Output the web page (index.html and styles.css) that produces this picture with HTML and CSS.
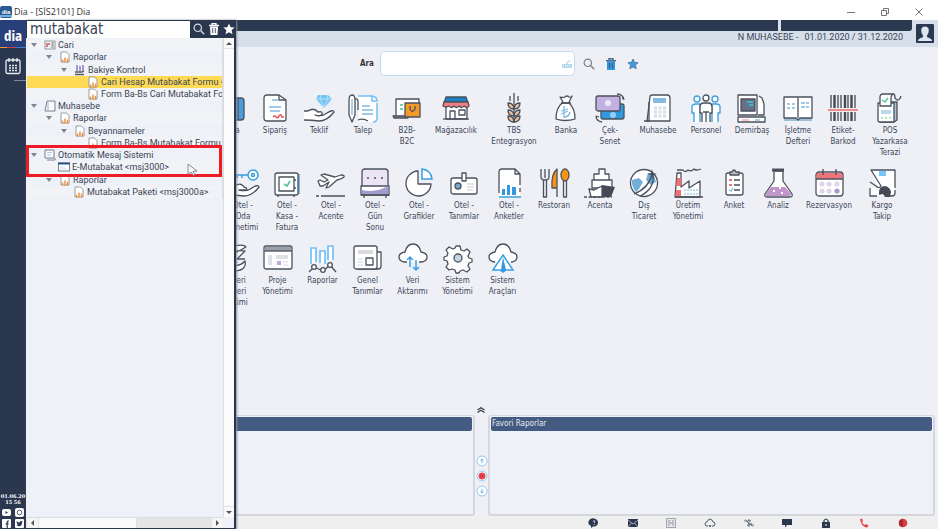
FILE: index.html
```html
<!DOCTYPE html>
<html lang="tr">
<head>
<meta charset="utf-8">
<title>Dia - [SİS2101] Dia</title>
<link rel="stylesheet" href="styles.css">
</head>
<body>
<svg class="defs" aria-hidden="true">
  <symbol id="report" viewBox="0 0 10 12"><path d="M1 1h5.500l2.500 2.500v7.500H1z" fill="#fff" stroke="#8d939d" stroke-width=".9"/><path d="M2.500 11.500V8.500M5 11.500V6.500M7.500 11.500V7.800" stroke="#ee9347" stroke-width="1.500"/></symbol>
  <symbol id="glass" viewBox="0 0 12 12"><circle cx="4.800" cy="4.800" r="3.700" fill="none" stroke="currentColor" stroke-width="1.200"/><path d="M7.600 7.600l3.600 3.600" stroke="currentColor" stroke-width="1.400"/></symbol>
</svg>
<div class="window">
  <header class="titlebar">
    <svg class="app-icon" viewBox="0 0 12 12"><rect width="12" height="12" rx="2" fill="#2b5a93"/><rect y="9" width="12" height="2" fill="#6fb4e0"/><text x="6" y="8" class="mini-logo">dia</text></svg>
    <h1>Dia - [SİS2101] Dia</h1>
    <div class="window-buttons">
      <button aria-label="Küçült"><svg viewBox="0 0 10 10"><path d="M1 5.500h8" class="wb"/></svg></button>
      <button aria-label="Önceki boyut"><svg viewBox="0 0 10 10"><path d="M1.500 3.500h5v5h-5zM3.500 3.500v-2h5v5h-2" class="wb"/></svg></button>
      <button aria-label="Kapat"><svg viewBox="0 0 10 10"><path d="M1.500 1.500l7 7M8.500 1.500l-7 7" class="wb"/></svg></button>
    </div>
  </header>
  <div class="body">
    <nav class="rail">
      <div class="logo"><span>dia</span></div>
      <button class="calendar" aria-label="Takvim"><svg viewBox="0 0 16 18"><rect x="1" y="3" width="14" height="13.500" rx="1.500" fill="none" stroke="#e8ebf1" stroke-width="1.300"/><path d="M4 1v4M8 1v4M12 1v4" stroke="#e8ebf1" stroke-width="1.300"/><path d="M4 8.500h8M4 11h8M4 13.500h8" stroke="#e8ebf1" stroke-width="1.500" stroke-dasharray="2 1"/></svg></button>
      <div class="rail-line"></div>
      <div class="clock">01.06.20<br>15 56</div>
      <div class="social">
        <a href="#" aria-label="YouTube"><svg viewBox="0 0 9 9"><rect y="1" width="9" height="7" rx="2" fill="#fff"/><path d="M3.500 3v3l2.500-1.500z" fill="#2a374f"/></svg></a>
        <a href="#" aria-label="Instagram"><svg viewBox="0 0 9 9"><rect width="9" height="9" rx="2" fill="#fff"/><circle cx="4.500" cy="4.500" r="2.300" fill="none" stroke="#2a374f" stroke-width=".8"/></svg></a>
        <a href="#" aria-label="Facebook"><svg viewBox="0 0 9 9"><rect width="9" height="9" rx="1" fill="#fff"/><path d="M5.200 9V3.200q0-1.400 1.800-1.200M3.700 4.800h3" fill="none" stroke="#2a374f" stroke-width="1.200"/></svg></a>
        <a href="#" aria-label="Twitter"><svg viewBox="0 0 9 9"><rect width="9" height="9" rx="1" fill="#fff"/><path d="M1.500 2q1.300 1.500 3 1.500Q4.500 2 6 2l1.800.4-.7 1Q7 7 4 7.300L1.500 6.700l1.300-.6Q1.300 4.500 1.500 2z" fill="#2a374f"/></svg></a>
      </div>
    </nav>

    <main class="main">
      <div class="topbar">
        <div class="strips"><div class="strip"></div><div class="strip strip-end"></div></div>
        <div class="period"><span>N MUHASEBE -</span><span>01.01.2020 / 31.12.2020</span></div>
        <button class="user" aria-label="Kullanıcı"><svg viewBox="0 0 18 19"><rect width="18" height="19" rx="1" fill="#2a3850"/><path d="M2 17q0-2.500 4.500-3.500l.7-1.500Q5 9 5.200 6q.3-3.500 3.800-3.500T12.800 6q.2 3-2 6l.7 1.500Q16 14.500 16 17z" fill="#dde6f0"/></svg></button>
      </div>

      <div class="search-row">
        <label for="module-search">Ara</label>
        <div class="search-box"><input id="module-search" type="text"><svg viewBox="0 0 12 10"><rect x="1" y="5" width="10" height="4" fill="#b5d7ee"/><path d="M6 5V3.500L9.500 1.500" stroke="#a9cbe4" fill="none"/><path d="M2 7h8" stroke="#fff" stroke-dasharray="1 1"/></svg></div>
        <button class="tool gray" aria-label="Ara"><svg viewBox="0 0 12 12"><use href="#glass"/></svg></button>
        <button class="tool" aria-label="Sil"><svg viewBox="0 0 12 12"><path d="M2 3.500h8v8.500H2z" fill="#2f96da"/><path d="M1 2.800h10M4 2V.8h4V2" fill="none" stroke="#466b8d" stroke-width="1.400"/><path d="M4.500 5v5M7.500 5v5" stroke="#3a5c80"/></svg></button>
        <button class="tool" aria-label="Favoriler"><svg viewBox="0 0 12 12"><path d="M6 1l1.500 3.300 3.600.4-2.700 2.400.8 3.600L6 8.900l-3.200 1.800.8-3.600L.9 4.700l3.600-.4z" fill="#3aa0e4" stroke="#52749a" stroke-width=".9"/></svg></button>
      </div>

      <section class="modules" aria-label="Modüller">
        <div class="row row-one">
          <button class="module"><svg viewBox="0 0 30 30"><rect x="5" y="5" width="23" height="22" rx="3" fill="#4a9ddc" class="l"/><path d="M22 5v22" class="l"/></svg>Kasa</button>
          <button class="module"><svg viewBox="0 0 30 30"><path d="M7 2h12l7 5v19q0 2-2 2H7q-3 0-3-3V5q0-3 3-3z" fill="#fff" class="l"/><path d="M19 2v5h7" class="n l"/><path d="M12 7h7M9 14h12M10 18h10" class="b"/><path d="M13 24q2-2 3 0t3-1 3 1h2" fill="none" stroke="#e2595b" stroke-width="1.600"/></svg>Sipariş</button>
          <button class="module"><svg viewBox="0 0 30 30"><path d="M14 2h10l4 4-8 9-8-9z" fill="#74c3f4"/><path d="M12 6h16M17 2l-1 4 4 8 4-8-1-4" fill="none" stroke="#b8e2fb"/><path d="M0 18h4q6-4 10 1 5-1 4 2t-7 1q7 2 12-2 6-4 7-1-7 9-15 9-7-1-15-1" fill="#fff" class="l"/></svg>Teklif</button>
          <button class="module"><svg viewBox="0 0 30 30"><path d="M10 3h14q5 1 5 5v18q0 3-4 3H11" fill="#fff"/><path d="M10 3h14q5 1 5 5h-5V3M29 10v15q0 4-4 4" fill="none" stroke="#74bff1" stroke-width="1.500"/><path d="M14 13h8M14 17h11M14 21h11" class="b"/><path d="M1 7q0-5 3-5t3 5v15l-3 7-3-7zM7 6q3-1 3 3v8" fill="#fff" class="l"/><path d="M4 6v16" class="b"/><path d="M10 27q5-2 10 1" class="n l"/></svg>Talep</button>
          <button class="module"><svg viewBox="0 0 30 30"><path d="M4 23V6h23v8" fill="#fff" class="l"/><path d="M1 23h15v2H2z" fill="#999ca4" class="l"/><path d="M8 12h3M8 16h3" stroke="#75d1a5" stroke-width="2"/><path d="M13 10h15v14H13z" fill="#f39a2a" class="l"/><path d="M18 13v3q2.500 5 5 0v-3" class="n l"/></svg>B2B-<br>B2C</button>
          <button class="module"><svg viewBox="0 0 30 30"><path d="M5 12h21v14H5z" fill="#fff" class="l"/><path d="M5 4h20l2 6H3z" fill="#1d80c3" class="l"/><path d="M3 9h24l1 4q-2 3-5 0-2 3-5 0-2 3-5 0-3 3-5 0-3 2-6 0z" fill="#f17e83" class="l"/><path d="M9 26v-8h5v8M18 17h6v5h-6z" class="n l"/><path d="M2 26h26" class="l"/></svg>Mağazacılık</button>
          <button class="module"><svg viewBox="0 0 30 30"><g fill="#edc39f" class="l"><path d="M15 16q-6 0-6-6 5 0 6 5 1-5 6-5 0 6-6 6z"/><path d="M15 23q-6 0-6-6 5 0 6 5 1-5 6-5 0 6-6 6z"/><path d="M15 29q-6 0-6-6 5 0 6 5 1-5 6-5 0 6-6 6z"/></g><path d="M15 0v30M11 3v5M19 3v5" class="l"/></svg>TBS<br>Entegrasyon</button>
          <button class="module"><svg viewBox="0 0 30 30"><path d="M11 10q-6 5-6 16 9 3 19 0 0-11-6-16z" fill="#fff" class="l"/><path d="M10 10h10M12 9L9 4q3 1 5 0 2-2 4 0 3 1 3-1l-3 6" fill="#fff" class="l"/><path d="M13 13v11q5 0 6-5M10 18l7-2M10 21l7-3" class="b"/></svg>Banka</button>
          <button class="module"><svg viewBox="0 0 30 30"><rect x="6" y="11" width="23" height="15" rx="2" fill="#2f99df" class="l"/><circle cx="18" cy="22" r="3" fill="#93cdf1"/><rect x="1" y="3" width="24" height="15" rx="2" fill="#c2b1df" class="l"/><circle cx="13" cy="10" r="3" fill="#eee8f6"/><path d="M22 1q6 0 7 6M1 23q0 5 6 6M29 6l-2-1M1 23l3 1" class="n l"/></svg>Çek-<br>Senet</button>
          <button class="module"><svg viewBox="0 0 30 30"><path d="M9 2h15q3 0 3 3v23H4L7 4q0-2 2-2z" fill="#fff" class="l"/><path d="M1 28h6M6 9v18" class="l"/><path d="M10 5h13v5H10z" fill="#86bbe1"/><path d="M11 15h12M11 19h12M11 23h12" stroke="#d7dfea" stroke-width="3" stroke-dasharray="3 1.500"/></svg>Muhasebe</button>
          <button class="module"><svg viewBox="0 0 30 30"><g fill="#fff" stroke="#44a1df" stroke-width="1.400"><circle cx="6" cy="6" r="3"/><circle cx="24" cy="6" r="3"/><path d="M3 29V20H1v-6q0-3 4-3h4v18M27 29v-9h2v-6q0-3-4-3h-4v18"/></g><circle cx="15" cy="5" r="3" fill="#fff" class="l"/><path d="M11 29v-9H9v-6q0-4 4-4h4q4 0 4 4v6h-2v9" fill="#fff" class="l"/><path d="M15 19v10M12 19h6" class="l"/></svg>Personel</button>
          <button class="module"><svg viewBox="0 0 30 30"><path d="M1 2h19v20H1zM22 3l3 2 2 6v11h-6" fill="#fff" class="l"/><rect x="4" y="6" width="14" height="12" fill="#65718b" class="l"/><path d="M10 9h6M12 12h4" stroke="#3ec8d0" stroke-width="1.500"/><path d="M1 24h27v5H1z" fill="#fff" class="l"/><path d="M5 27h7" stroke="#ef8a8f"/><path d="M18 27h5" class="b"/></svg>Demirbaş</button>
          <button class="module"><svg viewBox="0 0 30 30"><path d="M1 28v-3h28v3z" fill="#9cbddb"/><path d="M1 4h28v21h-12l-2 2-2-2H1z" fill="#fff" class="l"/><path d="M15 5v20" class="l"/><path d="M4 11h3M9 11h3M4 15h3M9 15h3M18 10h4M23 10h3M18 14h4M23 14h3" class="b"/></svg>İşletme<br>Defteri</button>
          <button class="module"><svg viewBox="0 0 30 30"><path d="M3 2v26M10 2v26M13 2v26M20 2v26M27 2v26" stroke="#444950" stroke-width="1.300"/><path d="M6.500 2v26M17 2v26M23.500 2v26" stroke="#444950" stroke-width="2.400"/><path d="M0 15h30v4H0z" fill="#eff0f6"/><path d="M0 17h30" stroke="#ed7375" stroke-width="1.600"/></svg>Etiket-<br>Barkod</button>
          <button class="module"><svg viewBox="0 0 30 30"><path d="M17 9h5v18l-3 2H5z" fill="#a5c3dd" class="l"/><path d="M3 10h16v19H5q-2 0-2-2z" fill="#fff" class="l"/><path d="M5 13V4q0-3 3-3h10q-2 1-2 4v8z" fill="#fff" class="l"/><path d="M18 1q2 0 2 4 4 5 6-2" class="n l"/><path d="M7 7l3 2 3-4" stroke="#58c99a" fill="none" stroke-width="1.500"/><path d="M6 19h10" stroke="#bdd9ed" stroke-width="4"/><path d="M6 25h10" stroke="#67c9a0" stroke-dasharray="2 2"/></svg>POS<br>Yazarkasa<br>Terazi</button>
        </div>
        <div class="row row-two">
          <button class="module"><svg viewBox="0 0 30 30"><path d="M5 7h15M9 7v3M14 7v3" class="blue"/><circle cx="25" cy="7" r="5" fill="#fff" class="blue"/><circle cx="25" cy="7" r="1.500" class="blue"/><path d="M0 18h7q6-4 9 1 4 1 2 3h-7q8 2 13-2 6-4 7-1-7 9-15 9-7-1-16-1" fill="#fff" class="l"/></svg>Otel -<br>Oda<br>Yönetimi</button>
          <button class="module"><svg viewBox="0 0 30 30"><path d="M26 6h2v20h-2z" fill="#78b8e4"/><rect x="3" y="5" width="23" height="22" rx="2" fill="#fff" class="l"/><rect x="7" y="9" width="15" height="14" fill="#fff" class="l"/><path d="M12 16l3 2 3-5" stroke="#4fc99a" stroke-width="1.600" fill="none"/><path d="M6 27v2M22 27v2M22 12h2M22 20h2" class="l"/></svg>Otel -<br>Kasa -<br>Fatura</button>
          <button class="module"><svg viewBox="0 0 30 30"><path d="M4 18l-2-5 2-1 4 2 4-2-7-5 3-1 11 3 6-2q4 0 3 2-2 2-7 3l-8 7-3 1 3-6-6 4z" fill="#fff" class="l"/><path d="M5 28h24M0 28h3" class="l"/></svg>Otel -<br>Acente</button>
          <button class="module"><svg viewBox="0 0 30 30"><path d="M2 20V4q0-3 3-3h20q3 0 3 3v16z" fill="#ebe5f5" class="l"/><path d="M7 10h2M14 10h2M21 10h2" class="l"/><path d="M1 18h28v9H1z" fill="#fff" class="l"/><path d="M2 22q14 3 26-4v8H2z" fill="#a59bd0"/><path d="M4 27v3M26 27v3M1 27h28" class="l"/></svg>Otel -<br>Gün<br>Sonu</button>
          <button class="module"><svg viewBox="0 0 30 30"><path d="M14 3v13h13A12.500 12.500 0 1 1 14 3z" fill="#fff" class="l"/><path d="M18 1q9 1 10 10H18z" fill="#fff" class="blue"/></svg>Otel -<br>Grafikler</button>
          <button class="module"><svg viewBox="0 0 30 30"><rect x="2" y="10" width="26" height="16" rx="2" fill="#fff" class="l"/><path d="M13 5h4v8h-4z" fill="#fff" class="l"/><circle cx="9" cy="18" r="3" fill="#78a6d0" class="l"/><path d="M18 16h7M18 19h7M18 22h6" stroke="#c8cbd1"/></svg>Otel -<br>Tanımlar</button>
          <button class="module"><svg viewBox="0 0 30 30"><path d="M5 29V4q0-3 3-3h13l5 5v23z" fill="#fff"/><path d="M5 25V4q0-3 3-3h13l5 5v11M21 1v5h5M26 20v4" class="n l"/><path d="M8 27v-6h3v6zM13 27V17h3v10zM18 27v-8h4v8z" fill="#3298df"/><path d="M5 29h22" class="blue"/></svg>Otel -<br>Anketler</button>
          <button class="module"><svg viewBox="0 0 30 30"><path d="M2 1v8q0 3 4 3t4-3V1M6 1v9M4.500 12v17h3V12" class="n l"/><path d="M18 29V1q-6 5-5 19h5" fill="#f79410" class="l"/><path d="M24.500 12v17h3V12" class="n l"/><ellipse cx="26" cy="7" rx="4" ry="6" fill="#f79410" class="l"/></svg>Restoran</button>
          <button class="module"><svg viewBox="0 0 30 30"><path d="M14 6V1h6v5h4v6H9V6zM7 12h20v8H7z" fill="#fff" class="l"/><path d="M17 17l13 2-4 10H15z" fill="#454b56"/><path d="M4 21l5 1 8-4v11H6z" fill="#fff" class="l"/><path d="M-1 29h28" class="l" stroke-dasharray="3 1.500"/></svg>Acenta</button>
          <button class="module"><svg viewBox="0 0 30 30"><circle cx="15" cy="15" r="13.500" fill="#fff" class="l"/><path d="M3 12l7-2 4 4-4 7-3 3q-5-6-4-12zM19 5l6 2 2 7-5 3-5-5z" fill="#72acd8"/><path d="M5 26Q20 20 23 6M11 28Q26 21 24 6" class="n l"/><path d="M23 1l1 4 4 1-4 1-1 4-1-4-4-1 4-1z" fill="#4b515c"/></svg>Dış<br>Ticaret</button>
          <button class="module"><svg viewBox="0 0 30 30"><path d="M2 29L4 5h4v14l8-6v7l11-7v16z" fill="#fff" class="l"/><path d="M3 18L4 10h4v8zM2 29l1-7h5v7z" fill="#ee7075"/><path d="M4 2h6q2 3 5 0 3 2 6-1 2 2 7 0M2 29h28" class="n l"/><path d="M11 22h14M11 26h14" stroke="#b8dbf2" stroke-width="2" stroke-dasharray="2 1"/></svg>Üretim<br>Yönetimi</button>
          <button class="module"><svg viewBox="0 0 30 30"><rect x="7" y="5" width="17" height="22" rx="2" fill="#fff" class="l"/><path d="M11 7V4h2q2-4 4 0h3v3z" fill="#bbbec5" class="l"/><path d="M15 12h6M15 17h6M15 22h6" class="l"/><path d="M10 12h3M10 17h3" stroke="#ed7375" stroke-width="2"/><path d="M10 22l2 1 2-3" class="b"/></svg>Anket</button>
          <button class="module"><svg viewBox="0 0 30 30"><path d="M11 3v10L2 26q-1 3 2 3h23q3 0 2-3l-9-13V3z" fill="#fff" class="l"/><path d="M8 19h14l6 7q0 2-2 2H4q-2 0-1-2z" fill="#c195cb"/><path d="M9 2h12" stroke="#4c525c" stroke-width="3"/><path d="M10 23h2M18 25h2M16 20h2" stroke="#fff" stroke-width="2"/></svg>Analiz</button>
          <button class="module"><svg viewBox="0 0 30 30"><rect x="2" y="4" width="27" height="24" rx="3" fill="#fff" class="l"/><path d="M3 5h25v6H3z" fill="#f07479"/><path d="M2 11h27M9 1v6M22 1v6" class="l"/><g fill="#ded5e9"><circle cx="8" cy="16" r="2.600"/><circle cx="15" cy="16" r="2.600"/><circle cx="23" cy="16" r="2.600"/><circle cx="8" cy="23" r="2.600"/><circle cx="15" cy="23" r="2.600"/></g><circle cx="23" cy="23" r="2.600" fill="#aa99ca"/></svg>Rezervasyon</button>
          <button class="module"><svg viewBox="0 0 30 30"><path d="M4 2h24v26H3v-8l8-1z" fill="#fff"/><path d="M28 20V2H4l10 16q-2 3-5 0l-6-4M3 20v8h7M28 22v3q0 3-3 3h-2" class="n l"/><path d="M12 3h7v5h-7z" fill="#75c5fb"/><path d="M12 24q0-6 6-6 5 1 6 6l-1 5h-5l-2-3-4 1z" fill="#454b55"/></svg>Kargo<br>Takip</button>
        </div>
        <div class="row row-three">
          <button class="module"><svg viewBox="0 0 30 30"><path d="M4 3h12q10-2 12 1l-9 5h-8M4 13q12-7 23-5l-8 8 8 0M0 17h9q7-3 9 2l-5 3q9 2 14-4 2 9-10 10H0" fill="#fff" class="l"/></svg>Müşteri<br>İlişkileri<br>Yönetimi</button>
          <button class="module"><svg viewBox="0 0 30 30"><rect x="1" y="3" width="28" height="23" rx="2" fill="#fff" class="l"/><path d="M2 4h26v4H2z" fill="#9ba1aa"/><path d="M1 8h28" class="l"/><path d="M5 12h4v10H5zM13 12h12v4H13z" fill="#e0e1e7"/><path d="M14 18h4v4h-4z" fill="#c5a9da"/><path d="M20 19h5M20 22h5" stroke="#d7d9df"/></svg>Proje<br>Yönetimi</button>
          <button class="module"><svg viewBox="0 0 30 30"><path d="M3 21V5h5v14M12 20V8h5v13M20 17V3h5v14" fill="#fff" stroke="#74c0f5" stroke-width="1.700"/><path d="M1 29l5-5 9 4 7-6 6 7" class="n l"/><g fill="#fff" class="l"><circle cx="6" cy="24" r="2.300"/><circle cx="15" cy="27" r="2.300"/><circle cx="22" cy="22" r="2.300"/></g></svg>Raporlar</button>
          <button class="module"><svg viewBox="0 0 30 30"><path d="M23 9h5v14q0 3-3 3H5" fill="#fff" class="l"/><rect x="1" y="3" width="23" height="23" rx="2" fill="#fff" class="l"/><path d="M5 7h15v4H5z" fill="#dadce2"/><rect x="13" y="15" width="7" height="7" fill="#fff" class="l"/><path d="M5 16h5M5 19h5M5 22h5" stroke="#d2d4d9"/></svg>Genel<br>Tanımlar</button>
          <button class="module"><svg viewBox="0 0 30 30"><path d="M9 19H6q-5-1-5-5t6-5q2-8 8-8t8 8q6 1 6 5t-5 5h-3" fill="#fff" class="l"/><path d="M12 24V14m-3 3l3-3 3 3M18 17v10m-3-3l3 3 3-3" class="blue"/></svg>Veri<br>Aktarımı</button>
          <button class="module"><svg viewBox="0 0 30 30"><path d="M13 3h4l1 4 3 1 3-2 3 3-2 4 1 2 3 1v3l-3 1-1 3 2 3-3 3-4-2-3 1-1 2h-3l-1-3-3-1-3 1-3-3 2-3-1-3-3-1v-3l3-1 1-3-2-3 3-3 4 2 2-1z" fill="#fff" class="l"/><circle cx="15" cy="15" r="4" fill="#c2d4e5" class="l"/></svg>Sistem<br>Yönetimi</button>
          <button class="module"><svg viewBox="0 0 30 30"><path d="M7 19H6q-5-1-5-5t6-5q2-8 8-8t8 8q6 1 6 5t-5 5h-1" fill="#fff" class="l"/><path d="M15 12l10 15h-7l-3 2-3-2H5z" fill="#fff" class="blue"/><path d="M15 14l3 13-3 2-2-2z" fill="#319ae2"/></svg>Sistem<br>Araçları</button>
        </div>
      </section>

      <button class="collapse" aria-label="Aç / kapat"><svg viewBox="0 0 8 6"><path d="M.500 3L4 .8 7.500 3M.500 5.500L4 3.300l3.500 2.200" fill="none" stroke="#303b4d" stroke-width="1.200"/></svg></button>
      <div class="panels">
        <section class="panel"><h2>&nbsp;</h2></section>
        <div class="panel-tools">
          <button aria-label="Yukarı"><svg viewBox="0 0 12 12"><circle cx="6" cy="6" r="5" class="ring"/><path d="M6 8V4M4.500 5.500L6 4l1.500 1.500" class="arrow"/></svg></button>
          <button aria-label="Kaldır"><svg viewBox="0 0 12 12"><circle cx="6" cy="6" r="5" class="ring"/><circle cx="6" cy="6" r="3.500" fill="#f0444c"/><path d="M4 6h4" stroke="#a8303b"/></svg></button>
          <button aria-label="Aşağı"><svg viewBox="0 0 12 12"><circle cx="6" cy="6" r="5" class="ring"/><path d="M6 4v4M4.500 6.500L6 8l1.500-1.500" class="arrow"/></svg></button>
        </div>
        <section class="panel"><h2>Favori Raporlar</h2></section>
      </div>
      <footer class="status">
        <button aria-label="Yardım"><svg viewBox="0 0 12 10"><path d="M6 .5a4.500 4 0 1 1-1 8L3 10V8A4.500 4 0 0 1 6 .5z" fill="#2a374f"/><path d="M4.800 3.500Q6 2 7 3.300 7 4.500 6 5M6 6v1" stroke="#fff" stroke-width=".8" fill="none"/></svg></button>
        <button aria-label="Posta"><svg viewBox="0 0 12 10"><path d="M1 1h10v8H1z" fill="#2a374f"/><path d="M1 2l5 4 5-4M1 9l3.500-4M11 9L7.500 5" fill="none" stroke="#d2d8e1" stroke-width=".7"/></svg></button>
        <button aria-label="Haberler"><svg viewBox="0 0 12 10"><path d="M1.500.5h9v9h-9z" fill="#e7e9ec" stroke="#8b929e" stroke-width=".8"/><path d="M3 3h2.500M7 3h2M3 5h6M3 7h2M7 7h2" stroke="#78808e" stroke-width=".8"/></svg></button>
        <button aria-label="Bulut"><svg viewBox="0 0 12 10"><path d="M4 8H3Q1 8 1 6t2-2q1-3 3-3t3 3q2 0 2 2T9 8H8M5 7l1 2 1-2" fill="none" stroke="#4d586a"/></svg></button>
        <button aria-label="Döviz"><svg viewBox="0 0 12 10"><path d="M8 3Q4 1.500 4.500 4T8 6 4 7.500M6 1v8M1 3h3L2.500 1.500M11 7H8l1.500 1.500" fill="none" stroke="#596474" stroke-width=".9"/></svg></button>
        <button aria-label="Mesajlar"><svg viewBox="0 0 12 10"><path d="M1 1h10v6H6L4 9.500V7H1z" fill="#2a374f"/></svg></button>
        <button aria-label="Kilitle"><svg viewBox="0 0 12 10"><path d="M2 4h8v6H2z" fill="#2a374f"/><path d="M4 4V2.500Q6-.5 8 2.500V4" fill="none" stroke="#2a374f" stroke-width="1.200"/><path d="M6 6v2" stroke="#fff"/></svg></button>
        <button aria-label="Telefon"><svg viewBox="0 0 12 10"><path d="M2 1l2-.5 1 2.500-1 1q1 2.500 3 3l1-1 2.500 1.500Q10 9.500 8.500 9.500 3 8.500 2 1z" fill="#e8434a"/></svg></button>
        <button aria-label="Kayıt"><svg viewBox="0 0 12 10"><circle cx="6" cy="5" r="4.300" fill="#df3b3f"/><path d="M6 1a4 4 0 0 0 0 8z" fill="#a72730"/></svg></button>
      </footer>

      <aside class="drawer">
        <div class="drawer-search">
          <input type="text" value="mutabakat" aria-label="Menüde ara">
          <button aria-label="Ara"><svg viewBox="0 0 12 12"><use href="#glass"/></svg></button>
          <button aria-label="Temizle"><svg viewBox="0 0 12 12"><path d="M2 3.500h8L9.500 12h-7z" fill="#fff"/><path d="M1 2.500h10M4 2V.7h4V2" fill="none" stroke="#fff" stroke-width="1.300"/><path d="M4.700 5v5M7.300 5v5" stroke="#2a374f" stroke-width=".8"/></svg></button>
          <button aria-label="Favoriler"><svg viewBox="0 0 12 12"><path d="M6 .5l1.600 3.700 4 .3-3 2.700.9 4L6 9.200l-3.500 2 .9-4-3-2.700 4-.3z" fill="#fff"/></svg></button>
        </div>
        <div class="drawer-body">
          <ul class="tree">
            <li class="d1"><i></i><svg viewBox="0 0 12 10"><rect x="1" y="1" width="10" height="8" fill="#eee" stroke="#7d8591" stroke-width=".8"/><path d="M3 3v4M5 3v2" stroke="#d1474e" stroke-width="1.400"/><path d="M7.500 3h2M7.500 5h2M7.500 7h2" stroke="#555d69"/></svg>Cari</li>
            <li class="d2"><i></i><svg><use href="#report"/></svg>Raporlar</li>
            <li class="d3"><i></i><svg viewBox="0 0 12 12"><path d="M3 1v6M6 2v5M9 1v6" stroke="#9b8fca" stroke-width="1.800"/><path d="M1 8h7l2-1M1 10.500h9" stroke="#525a67" fill="none" stroke-width="1.300"/></svg>Bakiye Kontrol</li>
            <li class="d4 selected"><svg><use href="#report"/></svg>Cari Hesap Mutabakat Formu &lt;</li>
            <li class="d4"><svg><use href="#report"/></svg>Form Ba-Bs Cari Mutabakat For</li>
            <li class="d1"><i></i><svg viewBox="0 0 12 12"><path d="M3 1h8v10H1z" fill="#f8fafc" stroke="#6d7582" stroke-width=".9"/><path d="M4 2v8" stroke="#91bbdc"/></svg>Muhasebe</li>
            <li class="d2"><i></i><svg><use href="#report"/></svg>Raporlar</li>
            <li class="d3"><i></i><svg><use href="#report"/></svg>Beyannameler</li>
            <li class="d4"><svg><use href="#report"/></svg>Form Ba-Bs Mutabakat Formu</li>
            <li class="d1"><i></i><svg viewBox="0 0 12 12"><path d="M1 1h9v8H1zM3 11h8V9" fill="#fafbfd" stroke="#69717e" stroke-width=".9"/><path d="M3 3.500h5M3 6h4" stroke="#9bc7e4" stroke-width=".8"/></svg>Otomatik Mesaj Sistemi</li>
            <li class="d2"><svg viewBox="0 0 12 10"><rect x=".5" y="1" width="11" height="8" fill="#fff" stroke="#56657b" stroke-width=".8"/><path d="M0 1.500h12" stroke="#27578b" stroke-width="2"/><path d="M2 5h5M2 7h7" stroke="#c1d4e5" stroke-width=".8"/></svg>E-Mutabakat &lt;msj3000&gt;</li>
            <li class="d2"><i></i><svg><use href="#report"/></svg>Raporlar</li>
            <li class="d3"><svg><use href="#report"/></svg>Mutabakat Paketi &lt;msj3000a&gt;</li>
          </ul>
          <div class="vscroll"><span class="up"></span><span class="thumb"></span><span class="down"></span></div>
        </div>
        <div class="hscroll"><span class="left"></span><span class="thumb"></span><span class="right"></span></div>
        <div class="highlight"></div>
        <svg class="cursor" viewBox="0 0 12 12"><path d="M1 0v10.500L4 8l2.500 3.500L8 10.500 6 7.500l4-.5z" fill="#f7f8fa" stroke="#6b7078" stroke-width=".8"/></svg>
      </aside>
    </main>
  </div>
</div>
</body>
</html>
```
FILE: styles.css
```css
* { box-sizing: border-box; }
body { margin: 0; font: 8px/11px "DejaVu Sans Condensed", "DejaVu Sans", sans-serif; color: #3a4557; }
button { border: 0; padding: 0; background: none; font: inherit; color: inherit; }
button svg { display: block; }
input { font: inherit; }
ul { list-style: none; margin: 0; padding: 0; }
.defs { display: none; }
.window { height: 100vh; display: flex; flex-direction: column; overflow: hidden; background: #fff; }

.titlebar { height: 20px; flex: none; display: flex; align-items: center; gap: 2px; padding-top: 3px; }
.app-icon { width: 12px; height: 12px; }
.mini-logo { font: bold 6px "Liberation Sans", sans-serif; fill: #fff; text-anchor: middle; }
.titlebar h1 { flex: 1; margin: 0; font: 9px/12px "Open Sans", sans-serif; color: #333; }
.window-buttons { display: flex; gap: 24px; padding-right: 14px; }
.window-buttons svg { width: 10px; height: 10px; }
.wb { fill: none; stroke: #555; stroke-width: .8; }

.body { flex: 1; min-height: 0; display: flex; }
.rail { width: 26px; flex: none; background: #2a374f; display: flex; flex-direction: column; align-items: center; padding-bottom: 1px; }
.logo { width: 100%; height: 28px; background: #283f79; color: #fff; font: bold 18px/31px "Open Sans Condensed", "Roboto Condensed", "DejaVu Sans Condensed", sans-serif; font-size: 15px; text-align: center; border-bottom: 1px solid; border-image: linear-gradient(90deg, #e99a3b 0 30%, #d23d55 30% 60%, #3f79d0 60%) 1; }
.calendar { margin-top: 9px; }
.calendar svg { width: 16px; height: 18px; }
.rail-line { width: 12px; height: 1px; margin: 5px 0 auto; align-self: flex-end; background: #7b8798; }
.clock { color: #fff; font: bold 5px/6px "DejaVu Serif", serif; text-align: center; }
.social { display: grid; grid-template-columns: 9px 9px; gap: 2px 4px; padding-top: 3px; }
.social svg { display: block; width: 9px; height: 9px; }

.main { position: relative; flex: 1; min-width: 0; display: flex; flex-direction: column; background: #eff0f6; }
.topbar { height: 27px; flex: none; display: grid; grid-template-columns: 1fr 26px; grid-template-rows: 11px 16px; background: #d7dfea; }
.strips { display: flex; gap: 3px; }
.strip { flex: 1; background: #2a3850; }
.strip-end { flex: 0 0 131px; border-radius: 0 0 3px 0; }
.period { grid-row: 2; display: flex; justify-content: flex-end; gap: 6px; padding-right: 9px; font: 9px/12px Roboto, sans-serif; }
.user { grid-row: 1 / 3; grid-column: 2; padding: 2px 4px; }
.user svg { width: 18px; height: 19px; }

.search-row { display: flex; align-items: center; gap: 10px; padding: 4px 0 0 334px; }
.search-row label { font-weight: bold; color: #333; margin-right: -4px; }
.search-box { display: flex; align-items: center; width: 195px; height: 25px; margin-right: -2px; padding-right: 1px; background: #fff; border: 1px solid #bedcf5; border-radius: 5px; }
.search-box input { flex: 1; min-width: 0; border: 0; background: none; outline: 0; }
.search-box svg { width: 12px; height: 10px; }
.tool { color: #77818e; }
.tool svg { width: 12px; height: 12px; }

.modules { flex: 1; min-height: 0; display: flex; flex-direction: column; gap: 10px; padding-top: 17px; }
.row { display: grid; align-items: start; min-height: 65px; }
.row-one { padding-left: 183px; grid-template-columns: repeat(5, 44px) 54px 62px 42px 46px 50px 46px 46px 46px 44px 50px; }
.row-two { padding-left: 195px; grid-template-columns: repeat(5, 44px) 46px 44px 46px 46px 42px 46px 46px 42px 60px 46px; }
.row-three { padding-left: 184px; grid-template-columns: repeat(7, 45px); }
.module { text-align: center; white-space: nowrap; }
.module svg { width: 30px; height: 30px; margin: 0 auto 2px; overflow: visible; }
.l { stroke: #4b515c; stroke-width: 1.3; stroke-linejoin: round; }
.n { fill: none; }
.b { fill: none; stroke: #80b8e0; stroke-width: 1.3; }
.blue { stroke: #389fe1; stroke-width: 1.5; }
path.blue:not([fill]), circle.blue:not([fill]) { fill: none; }

.collapse { width: 8px; height: 8px; margin: 0 0 1px 451px; flex: none; }
.collapse svg { width: 8px; height: 6px; }
.panels { height: 101px; flex: none; display: grid; grid-template-columns: 449px 13px 1fr; padding-right: 3px; }
.panel { border: 1px solid #d5d7dc; border-width: 1px 2px 2px; border-radius: 3px; padding: 1px; background: #eef1f7; }
.panel h2 { margin: 0; height: 14px; padding-left: 1px; background: #435b80; color: #e6ebf2; border-radius: 2px; font: inherit; line-height: 14px; }
.panel-tools { display: flex; flex-direction: column; align-items: center; gap: 3px; padding-top: 40px; }
.panel-tools svg { width: 12px; height: 12px; }
.ring { fill: #fff; stroke: #8ccbf2; stroke-width: 1; }
.arrow { fill: none; stroke: #55a8dd; stroke-width: .9; }
.status { height: 13px; flex: none; display: flex; justify-content: space-between; align-items: center; padding: 0 29px 0 562px; background: #f0efef; }
.status svg { width: 12px; height: 10px; }

.drawer { position: absolute; left: 0; top: 0; bottom: 0; width: 210px; display: flex; flex-direction: column; background: #eef1f7; border: 1px solid #2a374f; border-width: 0 2px 1px 0; box-shadow: 1px 0 2px #8a919c; }
.drawer-search { height: 18px; flex: none; display: flex; align-items: center; gap: 3px; padding-left: 1px; background: #2a374f; color: #d5dae3; }
.drawer-search input { width: 163px; height: 17px; border: 0; padding: 0 3px; background: #fff; color: #3b4553; font-size: 15px; outline: 0; }
.drawer-search svg { width: 12px; height: 12px; }
.drawer-body { flex: 1; min-height: 0; display: flex; padding-left: 1px; background: #eef1f7; }
.tree { flex: 1; min-width: 0; height: 159px; margin-top: 1px; display: grid; grid-auto-rows: 1fr; overflow: hidden; border-right: 1px solid #dadce1; font: 9px/12px Roboto, sans-serif; }
.tree li { display: flex; align-items: center; gap: 2px; overflow: hidden; white-space: nowrap; }
.tree li:nth-child(odd) { background: #f2f3f6; }
.tree li svg { width: 12px; height: 12px; flex: none; }
.tree li i { width: 0; height: 0; margin-right: 5px; border: 3px solid transparent; border-top: 4px solid #7e8692; border-bottom: 0; }
.d1 { padding-left: 4px; }
.d2 { padding-left: 19px; }
.d3 { padding-left: 34px; }
.d4 { padding-left: 60px; }
.d2:not(:has(i)) { padding-left: 31px; }
.d3:not(:has(i)) { padding-left: 46px; }
.tree .selected { background: #ffda55; }
.vscroll { width: 11px; display: flex; flex-direction: column; align-items: center; background: #fafafa; border-left: 1px solid #dcdde0; }
.vscroll span { width: 100%; height: 10px; flex: none; display: grid; place-items: center; }
.vscroll .thumb { flex: 1; border: 1px solid #e1e2e5; border-width: 1px 0; background: #fbfbfb; }
.up::after, .down::after, .left::after, .right::after { content: ""; border: 3px solid transparent; }
.up::after { border-bottom: 3px solid #555; border-top: 0; }
.down::after { border-top: 3px solid #555; border-bottom: 0; }
.left::after { border-right: 3px solid #555; border-left: 0; }
.right::after { border-left: 3px solid #555; border-right: 0; }
.hscroll { height: 11px; flex: none; display: flex; margin-right: 11px; padding-left: 1px; background: #e5e5e6; border-top: 1px solid #dadce0; }
.hscroll .left, .hscroll .right { width: 11px; display: grid; place-items: center; background: #f5f5f6; }
.hscroll .right { margin-left: auto; }
.hscroll .thumb { width: 99px; background: #fafafa; border: 1px solid #dcdde0; border-width: 0 1px; }
.highlight { position: absolute; left: 0; top: 125px; width: 196px; height: 32px; border: 3px solid #ed1c24; }
.cursor { position: absolute; left: 161px; top: 144px; width: 12px; height: 12px; }
```
